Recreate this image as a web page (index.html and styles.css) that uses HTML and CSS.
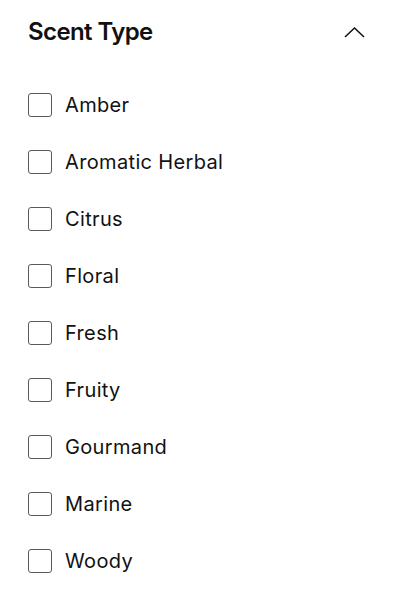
FILE: index.html
```
<!DOCTYPE html>
<html>
<head>
<meta charset="utf-8">
<link rel="stylesheet" href="styles.css">
</head>
<body>
<section class="filter">
  <div class="filter-head">
    <h2 class="filter-title">Scent Type</h2>
    <svg class="chevron" width="21" height="11" viewBox="0 0 21 11"><path d="M1 10 L10.5 1 L20 10" fill="none" stroke="#111" stroke-width="1.5"/></svg>
  </div>
  <ul class="options">
    <li class="option"><span class="box"></span><span class="label">Amber</span></li>
    <li class="option"><span class="box"></span><span class="label">Aromatic Herbal</span></li>
    <li class="option"><span class="box"></span><span class="label">Citrus</span></li>
    <li class="option"><span class="box"></span><span class="label">Floral</span></li>
    <li class="option"><span class="box"></span><span class="label">Fresh</span></li>
    <li class="option"><span class="box"></span><span class="label">Fruity</span></li>
    <li class="option"><span class="box"></span><span class="label">Gourmand</span></li>
    <li class="option"><span class="box"></span><span class="label">Marine</span></li>
    <li class="option"><span class="box"></span><span class="label">Woody</span></li>
  </ul>
</section>
</body>
</html>
```
FILE: styles.css
```
html, body { margin: 0; padding: 0; background: #fff; }
body { font-family: Inter, "Noto Sans", sans-serif; color: #111; }
.filter { padding: 17px 35px 0 28px; }
.filter-head { display: flex; align-items: center; justify-content: space-between; height: 30px; }
.filter-title { margin: 0; font-size: 24px; font-weight: 600; line-height: 30px; letter-spacing: -0.6px; }
.chevron { display: block; margin-top: 0; }
.options { list-style: none; margin: 29px 0 0; padding: 0; }
.option { display: flex; align-items: center; height: 57px; }
.box { width: 22px; height: 22px; border: 1.5px solid #5a5a5a; border-radius: 3px; box-sizing: content-box; flex: none; margin-top: 1px; }
.label { margin-left: 13px; font-size: 20px; line-height: 24px; letter-spacing: 0.35px; }
```
